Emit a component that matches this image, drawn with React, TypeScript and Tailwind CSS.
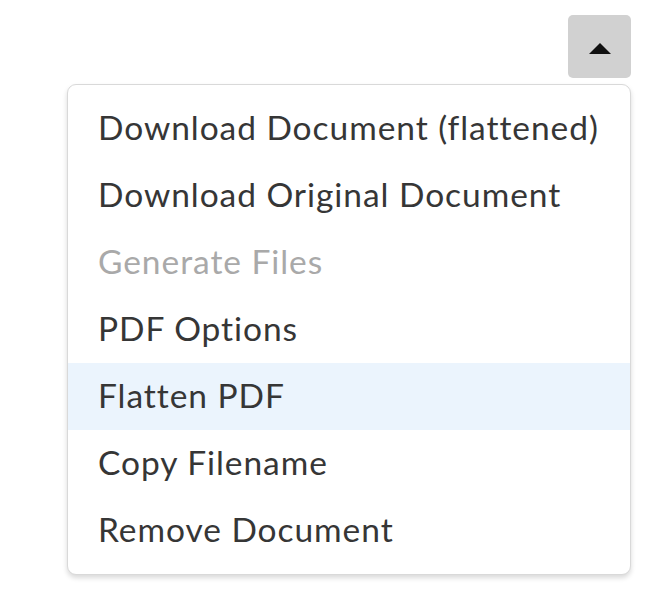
import React from 'react';

const items = [
  { label: 'Download Document (flattened)' },
  { label: 'Download Original Document' },
  { label: 'Generate Files', disabled: true },
  { label: 'PDF Options' },
  { label: 'Flatten PDF', active: true },
  { label: 'Copy Filename' },
  { label: 'Remove Document' },
];

export default function App() {
  return (
    <div
      className="w-[670px] h-[616px] bg-white"
      style={{ fontFamily: 'Lato, "Open Sans", sans-serif' }}
    >
      <div className="flex justify-end pt-[15px] pr-[39px]">
        <button className="w-[63px] h-[63px] rounded-[5px] bg-[#d1d1d1] flex items-center justify-center">
          <svg width="22" height="11" viewBox="0 0 22 11" className="mt-[3px]">
            <path d="M0 11 L11 0 L22 11 Z" fill="#111" />
          </svg>
        </button>
      </div>

      {/* menu */}
      <div className="ml-[67px] mt-[6px] w-[564px] rounded-[9px] border border-[#d9d9d9] bg-white py-[10px] shadow-[0_3px_5px_rgba(0,0,0,0.15)]">
        {items.map((item) => (
          <div
            key={item.label}
            className={`h-[67px] flex items-center pl-[30px] pb-[2px] text-[33.5px] tracking-[0.95px] leading-none ${
              item.active ? 'bg-[#ebf4fd]' : ''
            } ${item.disabled ? 'text-[#a9a9a9]' : 'text-[#363636]'}`}
          >
            {item.label}
          </div>
        ))}
      </div>
    </div>
  );
}
